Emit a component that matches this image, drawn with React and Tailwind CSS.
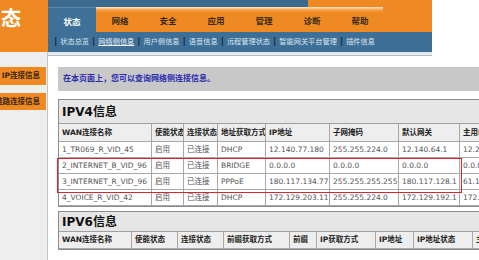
const FONT = "font-['DejaVu_Sans','Noto_Sans_CJK_SC',sans-serif]";

const tabs = ["状态", "网络", "安全", "应用", "管理", "诊断", "帮助"];
const subs = ["状态总览", "网络侧信息", "用户侧信息", "语音信息", "远程管理状态", "智能网关平台管理", "插件信息"];

const v4Cols = [93, 32, 34, 48, 64, 69, 61, 80];
const v4Head = ["WAN连接名称", "使能状态", "连接状态", "地址获取方式", "IP地址", "子网掩码", "默认网关", "主用DNS"];
const v4Rows = [
  ["1_TR069_R_VID_45", "启用", "已连接", "DHCP", "12.140.77.180", "255.255.224.0", "12.140.64.1", "12.245.37.1"],
  ["2_INTERNET_B_VID_96", "启用", "已连接", "BRIDGE", "0.0.0.0", "0.0.0.0", "0.0.0.0", "0.0.0.0"],
  ["3_INTERNET_R_VID_96", "启用", "已连接", "PPPoE", "180.117.134.77", "255.255.255.255", "180.117.128.1", "61.147.37.1"],
  ["4_VOICE_R_VID_42", "启用", "已连接", "DHCP", "172.129.203.11", "255.255.224.0", "172.129.192.1", "172.45.6.1"],
];

const v6Cols = [73, 46, 46, 66, 27, 59, 38, 59, 70];
const v6Head = ["WAN连接名称", "使能状态", "连接状态", "前缀获取方式", "前缀", "IP获取方式", "IP地址", "IP地址状态", "主用DNS"];

function Row({ cols, cells, head, h }) {
  return (
    <div className={`flex border-b border-[#a8a8a8] ${head ? "bg-[#eeeeee]" : "bg-white"}`} style={{ height: h }}>
      {cells.map((c, i) => (
        <div
          key={i}
          className={`shrink-0 flex items-center border-r border-[#a8a8a8] whitespace-nowrap overflow-hidden ${
            head ? "pl-[3px] font-bold text-[#222] text-[7.5px]" : "pl-[3px] text-[#555] text-[7.5px]"
          }`}
          style={{ width: cols[i] }}
        >
          {c}
        </div>
      ))}
    </div>
  );
}

export default function App() {
  return (
    <div className={`relative w-[479px] h-[260px] overflow-hidden bg-white ${FONT}`}>
      <div className="flex h-full">
        {/* left column */}
        <aside className="w-[48px] shrink-0 flex flex-col">
          <div className="h-[52px] bg-[#ef8a22] text-white text-[20px] font-bold leading-none pt-[9px] pl-[1px]">态</div>
          <div className="flex-1 bg-[#eeeeee] border-r border-[#c4c4c4] pt-[15px] flex flex-col gap-[8px]">
            <div className="h-[18px] mr-[1px] bg-[#ef8a22] flex items-center justify-end pr-[6px] overflow-hidden whitespace-nowrap text-[#3a2412] font-bold text-[7.5px]">
              IP连接信息
            </div>
            <div className="h-[17px] mr-[1px] bg-[#ef8a22] flex items-center justify-end pr-[6px] overflow-hidden whitespace-nowrap text-[#3a2412] font-bold text-[7.5px]">
              链路连接信息
            </div>
          </div>
        </aside>

        {/* main */}
        <main className="flex-1 min-w-0 flex flex-col">
          <header className="w-[384px] shrink-0">
            <div className="h-[7px] flex">
              <div className="w-[260px] bg-[#3b6a8e]" />
              <div className="flex-1 bg-[#ef8a22]" />
            </div>
            <div className="h-[25px] flex">
              <div className="w-[48px] bg-[#3f7198] border-t border-[#5a88ad] flex items-center justify-center text-white font-bold text-[8.5px] pt-[4px]">
                {tabs[0]}
              </div>
              <div className="w-[287px] flex bg-[linear-gradient(#fde6cc,#f4a04a_3px,#ef8a22_6px)]">
                {tabs.slice(1).map((t) => (
                  <div key={t} className="w-[48px] shrink-0 flex items-center justify-center text-[#3a2a1a] font-bold text-[8.5px] pt-[4px]">
                    {t}
                  </div>
                ))}
              </div>
              <div className="flex-1 bg-[#ef8a22]" />
            </div>
            <div className="h-[20px] bg-[#3e6f96] flex items-center pl-[6px] text-[7.2px] whitespace-nowrap">
              {subs.map((s, i) => (
                <span key={s} className="flex items-center">
                  <span className="text-[#10283f] font-bold text-[9px] leading-none mr-[3px]">|</span>
                  <span className={i === 1 ? "text-[#eef3f7] underline mr-[3px]" : "text-[#dbe5ee] mr-[3px]"}>{s}</span>
                </span>
              ))}
            </div>
            <div className="h-[4px] bg-[linear-gradient(#d6e0ea,#f4f6f8)] border-b border-[#b8b8b8]" />
          </header>

          <section className="pl-[10px] pt-[11px]">
            <div className="h-[24px] bg-[#c8c8c8] flex items-center pl-[5px] text-[#2b2bb0] font-bold text-[8px] whitespace-nowrap">
              在本页面上，您可以查询网络侧连接信息。
            </div>

            {/* IPV4 */}
            <div className="mt-[8px] w-[480px] border border-[#8c8c8c] bg-[#e6e6e6]">
              <div className="h-[24px] border-b border-[#a0a0a0] flex items-center pl-[3px] font-bold text-[12px] text-[#111]">IPV4信息</div>
              <Row cols={v4Cols} cells={v4Head} head h={18} />
              {v4Rows.map((r, i) => (
                <Row key={i} cols={v4Cols} cells={r} h={16} />
              ))}
            </div>

            {/* IPV6 */}
            <div className="mt-[4px] w-[480px] border border-[#8c8c8c] bg-[#e6e6e6]">
              <div className="h-[20px] border-b border-[#a0a0a0] flex items-center pl-[3px] font-bold text-[12px] text-[#111]">IPV6信息</div>
              <Row cols={v6Cols} cells={v6Head} head h={17} />
            </div>
          </section>
        </main>
      </div>

      {/* red annotation box */}
      <div className="absolute left-[57px] top-[158px] w-[405px] h-[35px] border-[1.5px] border-[#d8262c] pointer-events-none" />
    </div>
  );
}
